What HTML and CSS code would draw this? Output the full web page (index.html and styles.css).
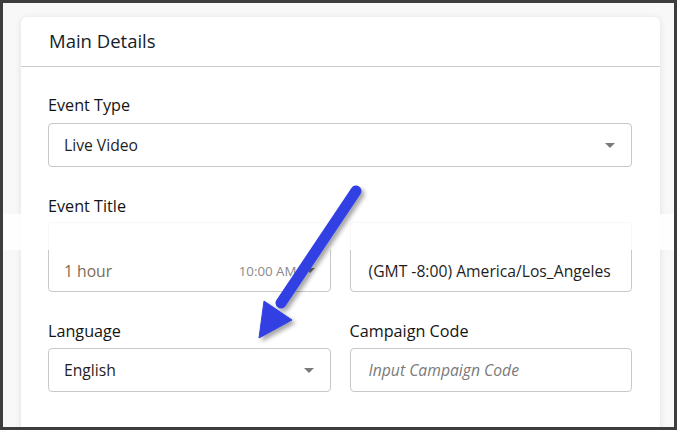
FILE: index.html
```html
<!DOCTYPE html>
<html>
<head>
<meta charset="utf-8">
<link rel="stylesheet" href="styles.css">
</head>
<body>
<div class="frame">
  <div class="card">
    <div class="card-header">Main Details</div>
    <div class="card-body">
      <div class="field">
        <div class="label">Event Type</div>
        <div class="box select">
          <span class="value">Live Video</span>
          <span class="caret"></span>
        </div>
      </div>
      <div class="field gap-top title-field">
        <div class="label">Event Title</div>
        <div class="row">
          <div class="box tall">
            <span class="value faded">1 hour</span>
            <span class="time">10:00 AM</span>
            <span class="caret small"></span>
          </div>
          <div class="box tall">
            <span class="value tz">(GMT -8:00) America/Los_Angeles</span>
          </div>
        </div>
      </div>
      <div class="row gap-top">
        <div class="field col">
          <div class="label">Language</div>
          <div class="box select">
            <span class="value">English</span>
            <span class="caret"></span>
          </div>
        </div>
        <div class="field col">
          <div class="label">Campaign Code</div>
          <div class="box">
            <span class="placeholder">Input Campaign Code</span>
          </div>
        </div>
      </div>
    </div>
  </div>
  <div class="band"></div>
  <svg class="arrow" width="677" height="430" viewBox="0 0 677 430">
    <defs>
      <filter id="sh" x="-20%" y="-20%" width="140%" height="140%">
        <feDropShadow dx="3" dy="3" stdDeviation="2.2" flood-color="#000" flood-opacity="0.35"/>
      </filter>
    </defs>
    <g filter="url(#sh)" fill="#3341e3" stroke="#3341e3">
      <line x1="356" y1="191" x2="281" y2="303" stroke-width="11" stroke-linecap="round"/>
      <polygon points="259,338 264,301 292,320" stroke-width="1" stroke-linejoin="round"/>
    </g>
  </svg>
</div>
</body>
</html>
```
FILE: styles.css
```css
* { box-sizing: border-box; }
html, body { margin: 0; padding: 0; }
body {
  font-family: "Open Sans", "Noto Sans", sans-serif;
  color: #1f1f1f;
}
.frame {
  position: relative;
  width: 677px;
  height: 430px;
  border: 3px solid #3d3d3d;
  background: #f8f8f8;
  overflow: hidden;
  padding: 14px 0 0 18px;
}
.card {
  width: 639px;
  height: 440px;
  background: #fff;
  border-radius: 6px 6px 0 0;
  box-shadow: 0 1px 7px rgba(0,0,0,0.10);
}
.card-header {
  height: 50px;
  border-bottom: 1px solid #cdcdcd;
  padding: 12px 0 0 28px;
  font-size: 18.5px;
  font-weight: 500;
  color: #141c2a;
  line-height: 24px;
}
.card-body {
  padding: 28px 28px 0 27px;
}
.field { display: flex; flex-direction: column; }
.label {
  font-size: 16.2px;
  line-height: 20px;
  font-weight: 500;
  color: #141414;
  margin-bottom: 8px;
}
.box {
  height: 44px;
  border: 1px solid #c8c8c8;
  border-radius: 4px;
  display: flex;
  align-items: center;
  padding: 0 15px;
  font-size: 15.7px;
  color: #1e1e1e;
  position: relative;
}
.select { justify-content: space-between; }
.caret {
  width: 0;
  height: 0;
  border-left: 5px solid transparent;
  border-right: 5px solid transparent;
  border-top: 5px solid #7a7a7a;
  margin-right: 1px;
}
.gap-top { margin-top: 29px; }
.title-field .label { margin-bottom: 6px; }
.row {
  display: flex;
  gap: 19px;
}
.row > .box, .row > .col { flex: 1; }
.col .label { margin-bottom: 7px; }
.tall {
  height: 70px;
  align-items: flex-end;
  padding-bottom: 9px;
}
.faded { color: #7b6c56; flex: 1; }
.time {
  font-size: 13.3px;
  color: #8a8a8a;
  margin-right: 8px;
  padding-bottom: 2px;
}
.caret.small { margin-bottom: 9px; margin-right: 0; }
.tz { padding-left: 3px; color: #1e1e1e; }
.placeholder {
  font-style: italic;
  color: #7a7a7a;
  padding-left: 3px;
}
.band {
  position: absolute;
  left: 0;
  right: 0;
  top: 211px;
  height: 36px;
  background: rgba(255,255,255,0.86);
}
.arrow {
  position: absolute;
  left: -3px;
  top: -3px;
  pointer-events: none;
}
```
